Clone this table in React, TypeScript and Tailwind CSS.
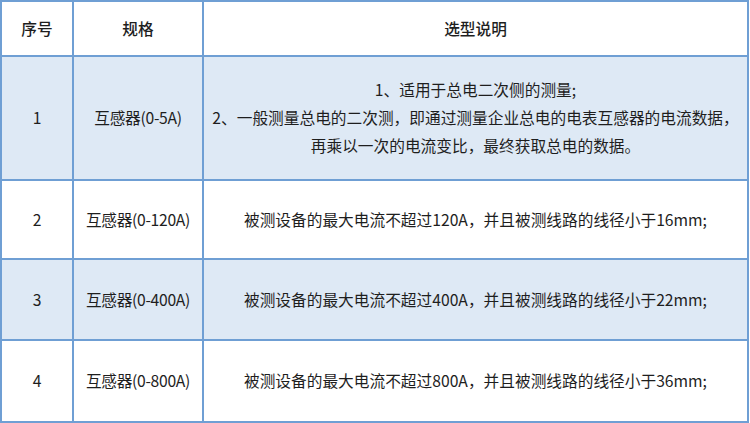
const rows = [
  {
    no: "1",
    spec: "互感器(0-5A)",
    desc: [
      "1、适用于总电二次侧的测量;",
      "2、一般测量总电的二次测，即通过测量企业总电的电表互感器的电流数据，",
      "再乘以一次的电流变比，最终获取总电的数据。",
    ],
    h: "h-[124px]",
    shaded: true,
  },
  {
    no: "2",
    spec: "互感器(0-120A)",
    desc: ["被测设备的最大电流不超过120A，并且被测线路的线径小于16mm;"],
    h: "h-[79px]",
    shaded: false,
  },
  {
    no: "3",
    spec: "互感器(0-400A)",
    desc: ["被测设备的最大电流不超过400A，并且被测线路的线径小于22mm;"],
    h: "h-[81px]",
    shaded: true,
  },
  {
    no: "4",
    spec: "互感器(0-800A)",
    desc: ["被测设备的最大电流不超过800A，并且被测线路的线径小于36mm;"],
    h: "h-[82px]",
    shaded: false,
  },
];

export default function App() {
  return (
    <div className="w-[750px] h-[423px] bg-white font-['Noto_Sans_CJK_SC','Noto_Sans',sans-serif] text-[#1e1e1e]">
      <table className="w-[749px] border-collapse table-fixed text-[15.7px]">
        <colgroup>
          <col className="w-[72px]" />
          <col className="w-[130px]" />
          <col />
        </colgroup>
        <thead>
          <tr className="h-[55px]">
            {["序号", "规格", "选型说明"].map((t) => (
              <th key={t} className="border-2 border-[#6f9fd4] font-medium text-center align-middle">
                {t}
              </th>
            ))}
          </tr>
        </thead>
        <tbody>
          {rows.map((r) => (
            <tr key={r.no} className={`${r.h} ${r.shaded ? "bg-[#dee9f5]" : "bg-white"}`}>
              <td className="border-2 border-[#6f9fd4] text-center align-middle">{r.no}</td>
              <td className="border-2 border-[#6f9fd4] text-center align-middle whitespace-nowrap tracking-[-0.3px]">
                {r.spec}
              </td>
              <td className="border-2 border-[#6f9fd4] text-center align-middle leading-[28px] whitespace-nowrap">
                {r.desc.map((line) => (
                  <div key={line}>{line}</div>
                ))}
              </td>
            </tr>
          ))}
        </tbody>
      </table>
    </div>
  );
}
